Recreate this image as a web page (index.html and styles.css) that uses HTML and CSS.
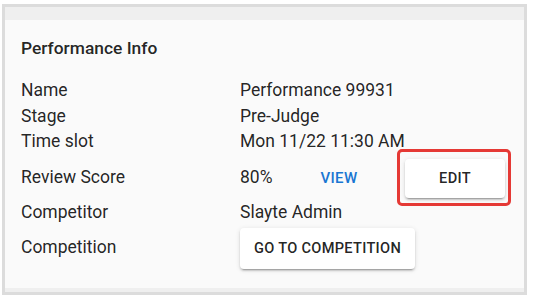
FILE: index.html
```html
<!DOCTYPE html>
<html lang="en">
<head>
    <meta charset="UTF-8">
    <meta name="viewport" content="width=device-width, initial-scale=1.0">
    <title>Performance Info</title>
    <link rel="stylesheet" href="styles.css">
</head>
<body>
    <div class="frame">
        <div class="card">
            <h2 class="card-title">Performance Info</h2>

            <div class="info-row">
                <div class="info-label">Name</div>
                <div class="info-value">Performance 99931</div>
            </div>
            <div class="info-row">
                <div class="info-label">Stage</div>
                <div class="info-value">Pre-Judge</div>
            </div>
            <div class="info-row">
                <div class="info-label">Time slot</div>
                <div class="info-value">Mon 11/22 11:30 AM</div>
            </div>

            <div class="info-row action-row first-action">
                <div class="info-label">Review Score</div>
                <div class="info-value">
                    <span class="score">80%</span>
                    <button class="text-btn">View</button>
                    <span class="highlight">
                        <button class="raised-btn edit-btn">Edit</button>
                    </span>
                </div>
            </div>
            <div class="info-row action-row">
                <div class="info-label">Competitor</div>
                <div class="info-value">Slayte Admin</div>
            </div>
            <div class="info-row action-row">
                <div class="info-label">Competition</div>
                <div class="info-value">
                    <button class="raised-btn">Go to competition</button>
                </div>
            </div>
        </div>
    </div>
</body>
</html>
```

FILE: styles.css
```css
body {
    margin: 0;
    background: #fff;
    font-family: Roboto, 'Liberation Sans', sans-serif;
    color: rgba(0, 0, 0, 0.87);
}

.frame {
    margin: 4px 6px 0 2px;
    height: 272px;
    border: 3px solid #dcdcdc;
    background: #efefef;
    padding-top: 13px;
    box-sizing: content-box;
}

.card {
    background: #fafafa;
    height: 268px;
    padding: 15px 16px 0 16px;
    box-sizing: border-box;
}

.card-title {
    font-size: 17.4px;
    font-weight: 500;
    line-height: 26px;
    margin: 0 0 17px;
}

.info-row {
    display: flex;
    align-items: center;
    font-size: 17.5px;
    line-height: 25.5px;
}

.info-label {
    width: 219px;
    flex-shrink: 0;
}

.info-value {
    display: flex;
    align-items: center;
}

.action-row {
    height: 35px;
}

.first-action {
    margin-top: 6px;
}

.score {
    width: 67px;
}

.text-btn {
    font-family: inherit;
    font-size: 15px;
    font-weight: 500;
    letter-spacing: 0.4px;
    text-transform: uppercase;
    color: #1976d2;
    background: none;
    border: none;
    padding: 0 8px;
    min-width: 64px;
    height: 36px;
    cursor: pointer;
}

.raised-btn {
    font-family: inherit;
    font-size: 14.6px;
    font-weight: 500;
    letter-spacing: 0.3px;
    text-transform: uppercase;
    color: rgba(0, 0, 0, 0.87);
    background: #fff;
    border: none;
    border-radius: 4px;
    height: 41px;
    padding: 0 14px;
    box-shadow: 0 3px 1px -2px rgba(0,0,0,0.2), 0 2px 2px 0 rgba(0,0,0,0.14), 0 1px 5px 0 rgba(0,0,0,0.12);
    cursor: pointer;
}

.edit-btn {
    width: 100px;
    height: 39px;
}

.highlight {
    position: relative;
    display: flex;
    margin-left: 34px;
}

.highlight::after {
    content: "";
    position: absolute;
    top: -10px;
    right: -6px;
    bottom: -8px;
    left: -8px;
    border: 3px solid #e53935;
    border-radius: 5px;
    pointer-events: none;
}
```
